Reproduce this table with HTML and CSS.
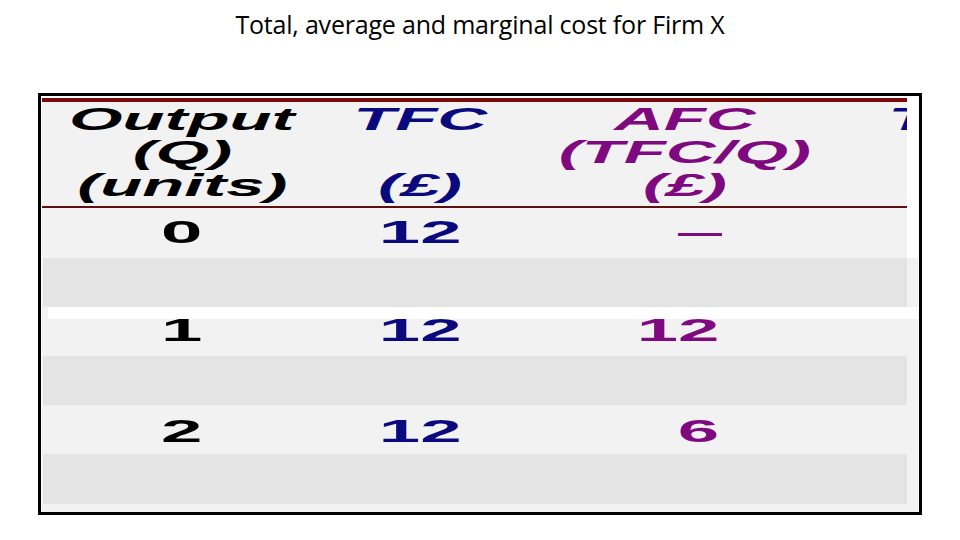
FILE: index.html
```html
<!DOCTYPE html>
<html>
<head>
<meta charset="utf-8">
<link rel="stylesheet" href="styles.css">
</head>
<body>
<h1 class="title">Total, average and marginal cost for Firm X</h1>
<div class="frame">
  <div class="head grid">
    <div class="cell ink-black"><span class="s">Output</span><span class="s">(Q)</span><span class="s">(units)</span></div>
    <div class="cell ink-navy"><span class="s">TFC</span><span class="s blank">&nbsp;</span><span class="s">(£)</span></div>
    <div class="cell ink-purple"><span class="s">AFC</span><span class="s">(TFC/Q)</span><span class="s">(£)</span></div>
    <div class="cell ink-navy"><span class="s">TVC</span><span class="s blank">&nbsp;</span><span class="s">(£)</span></div>
  </div>
  <div class="row r0 grid">
    <div class="cell ink-black"><span class="v">0</span></div>
    <div class="cell ink-navy"><span class="v">12</span></div>
    <div class="cell right ink-purple"><span class="v dash">—</span></div>
    <div class="cell"></div>
  </div>
  <div class="lower">
    <div class="band gray g1"></div>
    <div class="stripe"></div>
    <div class="row r1 grid">
      <div class="cell ink-black"><span class="v">1</span></div>
      <div class="cell ink-navy"><span class="v">12</span></div>
      <div class="cell right ink-purple"><span class="v">12</span></div>
      <div class="cell"></div>
    </div>
    <div class="band gray g2"></div>
    <div class="row r2 grid">
      <div class="cell ink-black"><span class="v">2</span></div>
      <div class="cell ink-navy"><span class="v">12</span></div>
      <div class="cell right ink-purple"><span class="v">6</span></div>
      <div class="cell"></div>
    </div>
    <div class="band gray g3"></div>
  </div>
</div>
</body>
</html>
```
FILE: styles.css
```css
html, body {
  margin: 0;
  padding: 0;
  background: #ffffff;
}

.title {
  margin: 0;
  height: 93px;
  padding-top: 7px;
  box-sizing: border-box;
  text-align: center;
  font-family: "Open Sans", "Liberation Sans", sans-serif;
  font-weight: 400;
  font-size: 25px;
  line-height: 34px;
  color: #000;
  letter-spacing: -0.2px;
}

.frame {
  margin-left: 38px;
  width: 884px;
  height: 422px;
  box-sizing: border-box;
  border: 3px solid #000;
  padding: 2px 0 0 1px;
  display: flex;
  flex-direction: column;
  overflow: hidden;
}

.grid {
  display: grid;
  grid-template-columns: 280px 196px 334px 210px;
  width: 865px;
  font-family: "Liberation Sans", Arial, sans-serif;
  font-weight: 700;
  font-size: 31px;
}

.head {
  flex: none;
  overflow: hidden;
  background: #f2f2f2;
  border-top: 4px solid #7b0a0a;
  border-bottom: 2px solid #5e1010;
  height: 103px;
  padding-top: 1px;
  box-sizing: content-box;
  font-style: italic;
  line-height: 33px;
}

.cell {
  display: flex;
  flex-direction: column;
  align-items: center;
  white-space: nowrap;
}

.cell.right {
  align-items: flex-end;
  padding-right: 133px;
}

.s {
  display: inline-block;
  transform: scaleX(2.22);
  transform-origin: center center;
}

.v {
  display: inline-block;
  transform: scaleX(2.4);
  transform-origin: center center;
}

.right .v {
  transform-origin: right center;
}

.v.dash {
  transform: scaleX(1.42);
  margin-right: -3px;
}

.ink-black { color: #000000; }
.ink-navy { color: #0a0a7e; }
.ink-purple { color: #7f0a80; }

.row {
  flex: none;
}

.r0 {
  height: 50px;
  line-height: 50px;
  background: #f2f2f2;
}

.lower {
  flex: 1;
  width: 876px;
  background: #f2f2f2;
  display: flex;
  flex-direction: column;
}

.gray {
  background: #e4e4e4;
  margin-left: 1px;
  width: 864px;
  flex: none;
}

.g1 { height: 49px; }
.g2 { height: 49px; }
.g3 { height: 50px; }

.stripe {
  height: 12px;
  margin-left: 6px;
  background: #ffffff;
  flex: none;
}

.r1 {
  height: 37px;
  line-height: 35px;
}

.r1 .v {
  margin-top: -6px;
}

.r2 {
  height: 49px;
  line-height: 53px;
}
```
